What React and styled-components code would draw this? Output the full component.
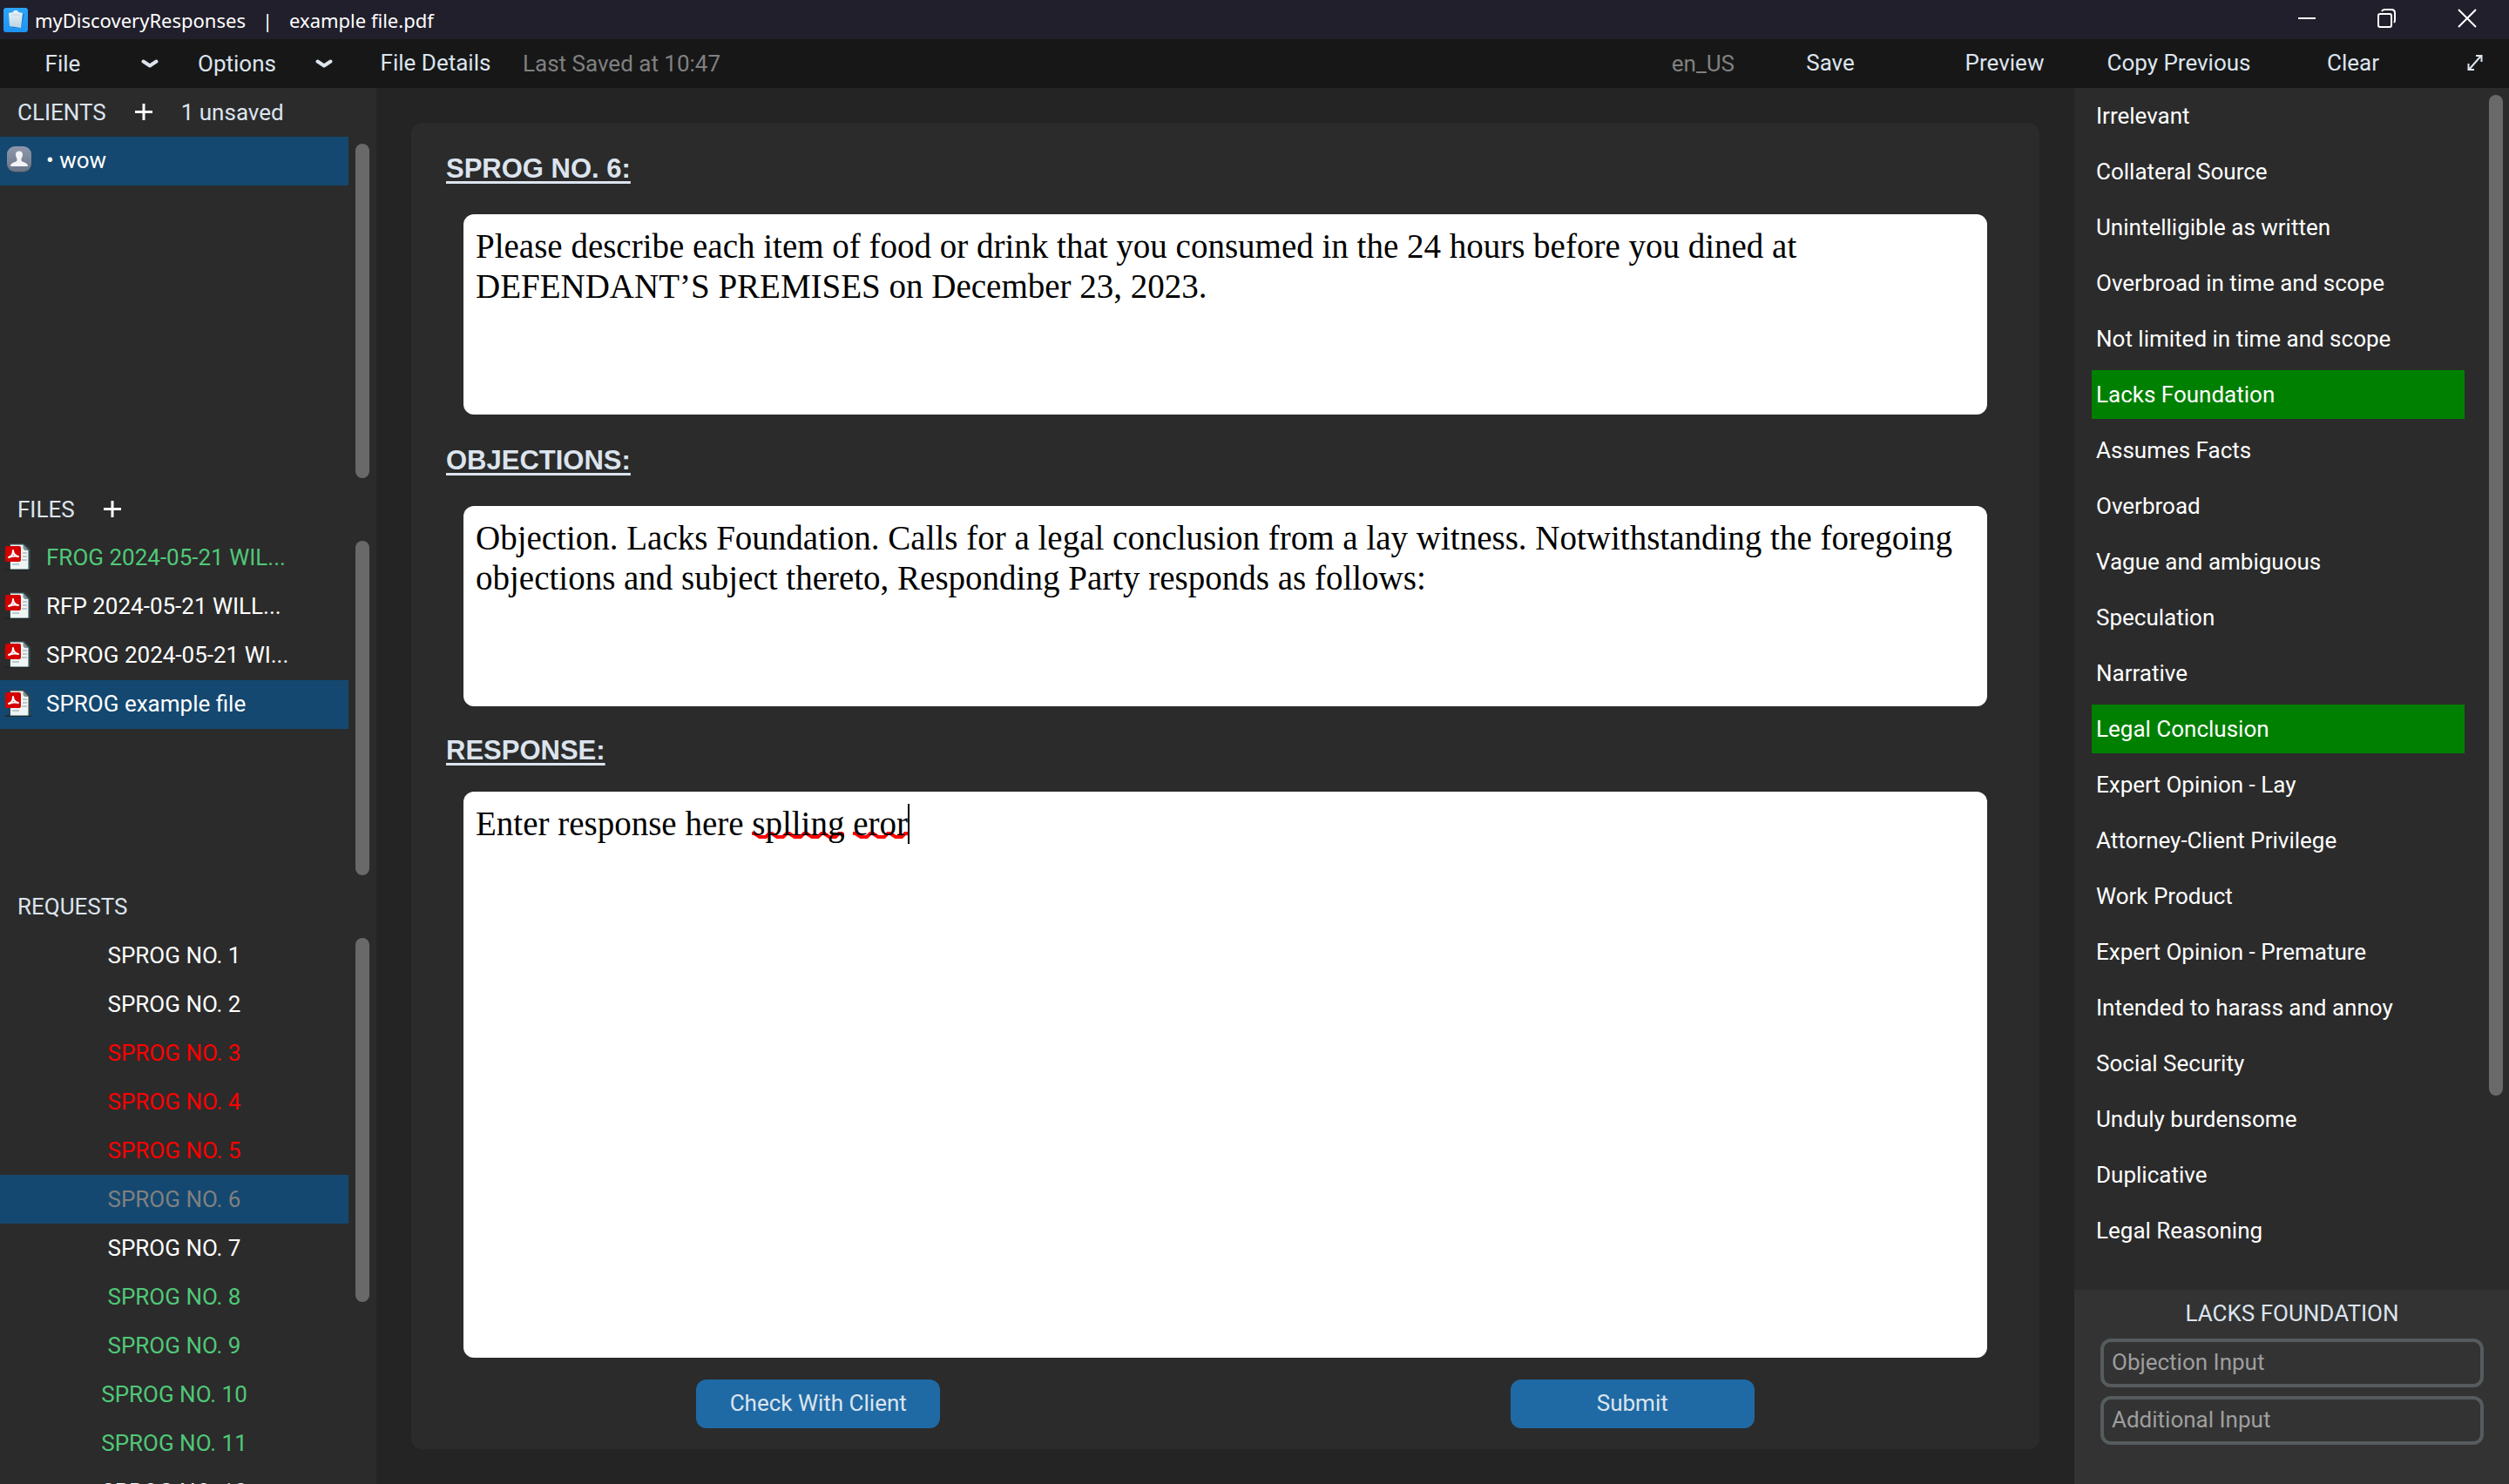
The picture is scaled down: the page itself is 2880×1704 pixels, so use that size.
import React, { useLayoutEffect, useRef, useState } from "react";
import styled, { createGlobalStyle } from "styled-components";

const GlobalStyle = createGlobalStyle`
  *, *::before, *::after { box-sizing: border-box; }
  html, body, #root { height: 100%; margin: 0; }
  body {
    background: #242424;
    color: #dce4ee;
    font-family: Roboto, "Liberation Sans", sans-serif;
    font-size: 26px;
    line-height: 30px;
    overflow: hidden;
  }
  button {
    border: 0;
    margin: 0;
    padding: 0;
    background: transparent;
    color: inherit;
    font: inherit;
    cursor: pointer;
  }
  h1, h2, ul { margin: 0; padding: 0; font: inherit; list-style: none; }
  svg { display: block; flex: none; }
`;

const Window = styled.div`
  display: flex;
  flex-direction: column;
  height: 100vh;
`;

const TitleBar = styled.header`
  display: flex;
  flex: none;
  align-items: center;
  height: 45px;
  padding: 0 2px 0 4px;
  background: #211f2b;
  color: #ffffff;
  font-family: "Noto Sans", "Open Sans", sans-serif;
  font-size: 22px;
`;

const WindowTitle = styled.h1`
  display: flex;
  flex: 1;
  gap: 19px;
  padding-left: 7px;
  white-space: pre;
`;

const WindowButton = styled.button`
  display: grid;
  place-items: center;
  width: 92px;
  height: 45px;
  padding-bottom: 3px;
`;

const MenuBar = styled.nav`
  display: flex;
  flex: none;
  align-items: center;
  height: 56px;
  background: #171717;
`;

const MenuButton = styled.button`
  width: ${(p) => (p.$narrow ? 79 : 200)}px;
  height: 56px;
  padding-bottom: 2px;
  display: grid;
  place-items: center;
`;

const DropButton = styled.button`
  display: grid;
  grid-template-columns: 1fr 56px;
  place-items: center;
  width: 200px;
  height: 56px;
`;

const Muted = styled.span`
  color: #808080;
`;

const Spacer = styled.div`
  flex: 1;
`;

const Language = styled(Muted)`
  padding-right: 10px;
`;

const Body = styled.div`
  display: flex;
  flex: 1;
  min-height: 0;
`;

const Sidebar = styled.aside`
  display: flex;
  flex-direction: column;
  flex: none;
  width: 432px;
  background: #2b2b2b;
`;

const Section = styled.section`
  display: flex;
  flex-direction: column;
  flex: ${(p) => (p.$fill ? "1" : "none")};
  min-height: 0;
  height: ${(p) => (p.$fill ? "auto" : "456px")};
`;

const SectionHead = styled.div`
  display: flex;
  flex: none;
  align-items: center;
  gap: 32px;
  height: 56px;
  padding-left: 20px;
`;

const AddButton = styled.button`
  width: 22px;
`;

const ScrollArea = styled.div`
  display: flex;
  flex: 1;
  min-height: 0;
  justify-content: space-between;
  overflow: hidden;
`;

const SideList = styled.ul`
  width: 400px;
`;

const SideRow = styled.button`
  display: flex;
  align-items: center;
  justify-content: ${(p) => (p.$centered ? "center" : "flex-start")};
  gap: 17px;
  width: 100%;
  height: 56px;
  padding: ${(p) => (p.$centered ? "0" : "0 4px 2px")};
  background: ${(p) => (p.$selected ? "#144870" : "transparent")};
  color: ${(p) => p.$color || "#ffffff"};
  white-space: nowrap;
`;

const Track = styled.div`
  flex: none;
  width: 16px;
  margin: 8px ${(p) => p.$edge}px 8px 0;
`;

const Thumb = styled.div`
  height: ${(p) => p.$size};
  border-radius: 8px;
  background: #696969;
`;

const Main = styled.main`
  display: flex;
  flex: 1;
  min-width: 0;
  padding: 40px;
`;

const Card = styled.form`
  display: flex;
  flex-direction: column;
  flex: 1;
  min-width: 0;
  padding-bottom: 24px;
  border-radius: 12px;
  background: #2b2b2b;
`;

const FieldTitle = styled.label`
  align-self: flex-start;
  margin: 32px 40px;
  font-family: "Liberation Sans", Arial, sans-serif;
  font-size: 31px;
  font-weight: 700;
  line-height: 41px;
  text-decoration: underline;
  text-decoration-thickness: 3px;
  text-underline-offset: 4px;
  text-decoration-skip-ink: none;
`;

const ResponseTitle = styled(FieldTitle)`
  margin: 30px 40px 27px;
`;

const Paper = styled.div`
  position: relative;
  display: flex;
  flex: ${(p) => (p.$fill ? "1" : "none")};
  height: ${(p) => (p.$fill ? "auto" : "230px")};
  min-height: 0;
  margin: 0 60px;
  border-radius: 12px;
  background: #ffffff;
`;

const PaperText = styled.textarea`
  position: relative;
  flex: 1;
  min-width: 0;
  padding: 14px;
  border: 0;
  outline: 0;
  resize: none;
  background: transparent;
  color: #000000;
  font: 39px/46px "Liberation Serif", "Times New Roman", serif;
`;

const Squiggle = styled.div`
  position: absolute;
  top: 46px;
  height: 8px;
  overflow: hidden;
`;

const Caret = styled.div`
  position: absolute;
  top: 14px;
  width: 2px;
  height: 46px;
  background: #000000;
`;

const Actions = styled.div`
  display: grid;
  grid-template-columns: 1fr 1fr;
  justify-items: center;
  margin-top: 25px;
`;

const ActionButton = styled.button`
  width: 280px;
  height: 56px;
  padding-bottom: 2px;
  border-radius: 12px;
  background: #1f6aa5;
`;

const ObjectionPanel = styled.aside`
  display: flex;
  flex-direction: column;
  flex: none;
  width: 499px;
  background: #2b2b2b;
`;

const ObjectionList = styled.ul`
  display: flex;
  flex-direction: column;
  gap: 8px;
  width: 428px;
  margin: 4px 0 0 20px;
`;

const ObjectionButton = styled.button`
  display: block;
  width: 100%;
  height: 56px;
  padding: 0 5px 1px;
  background: ${(p) => (p.$selected ? "#008000" : "transparent")};
  color: #ffffff;
  text-align: left;
`;

const Editor = styled.div`
  display: flex;
  flex-direction: column;
  flex: none;
  gap: 10px;
  height: 223px;
  padding: 12px 29px 0 30px;
  background: #333333;
`;

const EditorTitle = styled.h2`
  margin-bottom: 4px;
  text-align: center;
`;

const EditorInput = styled.input`
  width: 100%;
  height: 56px;
  padding: 0 9px 2px;
  border: 4px solid #565b5e;
  border-radius: 12px;
  outline: 0;
  background: transparent;
  color: #dce4ee;
  font: inherit;
  &::placeholder { color: #9e9e9e; opacity: 1; }
`;

const GREEN = "#50c878";
const RED = "#ff0000";

const files = [
  { name: "FROG 2024-05-21 WIL...", color: GREEN },
  { name: "RFP 2024-05-21 WILL..." },
  { name: "SPROG 2024-05-21 WI..." },
  { name: "SPROG example file", selected: true },
];

const requestColors = {
  3: RED, 4: RED, 5: RED, 6: "#808080", 8: GREEN, 9: GREEN, 10: GREEN, 11: GREEN,
};

const objections = [
  "Irrelevant", "Collateral Source", "Unintelligible as written",
  "Overbroad in time and scope", "Not limited in time and scope",
  "Lacks Foundation", "Assumes Facts", "Overbroad", "Vague and ambiguous",
  "Speculation", "Narrative", "Legal Conclusion", "Expert Opinion - Lay",
  "Attorney-Client Privilege", "Work Product", "Expert Opinion - Premature",
  "Intended to harass and annoy", "Social Security", "Unduly burdensome",
  "Duplicative", "Legal Reasoning",
];
const activeObjections = ["Lacks Foundation", "Legal Conclusion"];

function AppIcon() {
  return (
    <svg width="29" height="30" viewBox="0 0 29 30" aria-hidden="true">
      <defs>
        <linearGradient id="appBlue" x1="0" y1="0" x2="0" y2="1">
          <stop offset="0" stopColor="#2ba6fa" />
          <stop offset="1" stopColor="#1f93f0" />
        </linearGradient>
        <linearGradient id="appSheet" x1="0" y1="0" x2="0" y2="1">
          <stop offset="0" stopColor="#e9f3f8" />
          <stop offset="1" stopColor="#bdd4e3" />
        </linearGradient>
      </defs>
      <rect y="1" width="28" height="28" rx="3" fill="url(#appBlue)" />
      <path d="M10 24h10l4-15-3-2z" fill="#1674c4" opacity=".7" />
      <path d="M6 7l5-1 1-2h4l1 2 5 1-2 17-13-2z" fill="url(#appSheet)" />
      <path d="M9 9h10" stroke="#c2d6e3" strokeWidth="1" />
    </svg>
  );
}

function PersonIcon() {
  return (
    <svg width="32" height="32" viewBox="0 0 32 32" aria-hidden="true">
      <defs>
        <linearGradient id="personGrey" x1="0" y1="0" x2="0" y2="1">
          <stop offset="0" stopColor="#8d98ab" />
          <stop offset="1" stopColor="#6b7689" />
        </linearGradient>
      </defs>
      <rect x="4" y="1" width="28" height="29" rx="9" fill="#3e4c60" />
      <rect x="4" y="0" width="28" height="29" rx="9" fill="url(#personGrey)" />
      <path
        d="M18 5.500c2.500 0 4 1.500 4 4 0 2-1 3.500-1.500 5v2c1.500 2 7.500 2 7.500 6.500H8c0-4.500 6-4.500 7.500-6.500v-2c-.5-1.500-1.500-3-1.500-5 0-2.500 1.500-4 4-4z"
        fill="#f3f4f7"
      />
    </svg>
  );
}

function PdfIcon() {
  return (
    <svg width="32" height="32" viewBox="0 0 32 32" aria-hidden="true">
      <path d="M2 29h30v2H2z" fill="#1b2627" opacity=".8" />
      <path d="M7 0h17l7 7v23H7z" fill="#33484b" />
      <path d="M8 1.500h14.500L28.500 8v21.500H8z" fill="#eef5f5" />
      <path d="M22.500 1.500l6 6.500h-4l-2-2z" fill="#7d9292" />
      <path d="M22 11h5M22 15h5M21 19h6M10 24h8" stroke="#bccaca" strokeWidth="2" />
      <rect x="2" y="3" width="18" height="18" rx="2" fill="#d40000" />
      <path
        d="M6 16c3-1 5-4 5-8 0 4 2 6 6 7-4-1-8 0-11 1z"
        fill="none"
        stroke="#ffffff"
        strokeWidth="2"
        strokeLinejoin="round"
      />
    </svg>
  );
}

function PlusIcon() {
  return (
    <svg width="22" height="22" viewBox="0 0 22 22" aria-hidden="true">
      <path d="M11 1v19M1 10.500h20" stroke="#ffffff" strokeWidth="3" />
    </svg>
  );
}

function ChevronIcon() {
  return (
    <svg width="20" height="12" viewBox="0 0 20 12" aria-hidden="true">
      <path
        d="M2.500 3.500l7.500 5 7.500-5"
        fill="none"
        stroke="#dce4ee"
        strokeWidth="4"
        strokeLinecap="round"
        strokeLinejoin="round"
      />
    </svg>
  );
}

function ExpandIcon() {
  return (
    <svg width="20" height="20" viewBox="0 0 20 20" aria-hidden="true">
      <path
        d="M3 18L17 2M11 2h6.500v7M2.500 11v7H9"
        fill="none"
        stroke="#dce4ee"
        strokeWidth="2"
      />
    </svg>
  );
}

const windowIcons = {
  Minimize: "M1 11h20",
  Restore: "M1 8q0-2 2-2h11q2 0 2 2v11q0 2-2 2H3q-2 0-2-2zM5 3q1-2 3-2h8q4 0 4 4v8q0 2-1 3",
  Close: "M1 1l20 20M21 1L1 21",
};

function List({ children, size, edge = 8 }) {
  return (
    <ScrollArea>
      {children}
      <Track $edge={edge}>
        <Thumb $size={size} />
      </Track>
    </ScrollArea>
  );
}

const WAVE = 20;
const misspelled = ["splling", "eror"];

function SpellCheckedText({ id, defaultValue }) {
  const ref = useRef(null);
  const [text, setText] = useState(defaultValue);
  const [marks, setMarks] = useState({ words: [], caret: null });

  useLayoutEffect(() => {
    const css = getComputedStyle(ref.current);
    const pen = document.createElement("canvas").getContext("2d");
    pen.font = `${css.fontSize} ${css.fontFamily}`;
    const pad = parseInt(css.paddingLeft, 10);
    const widthOf = (s) => Math.round(pen.measureText(s).width);
    const words = misspelled
      .filter((w) => text.includes(w))
      .map((w) => ({ left: pad + widthOf(text.slice(0, text.indexOf(w))), width: widthOf(w) }));
    setMarks({ words, caret: pad + widthOf(text) });
  }, [text]);

  return (
    <Paper $fill>
      {marks.words.map((m, i) => (
        <Squiggle key={i} style={{ left: m.left, width: m.width }}>
          <svg width="400" height="8" viewBox="0 0 400 8" aria-hidden="true">
            <path
              d={Array.from({ length: 20 }, (_, n) => {
                const x = n * WAVE;
                return `M${x} 2h3l6 4h7l4-4h2`;
              }).join("")}
              fill="none"
              stroke="#ff0000"
              strokeWidth="4"
            />
          </svg>
        </Squiggle>
      ))}
      <PaperText
        id={id}
        ref={ref}
        value={text}
        spellCheck={false}
        onChange={(e) => setText(e.target.value)}
      />
      {marks.caret !== null && <Caret style={{ left: marks.caret }} />}
    </Paper>
  );
}

export default function App() {
  return (
    <Window>
      <GlobalStyle />
      <TitleBar>
        <AppIcon />
        <WindowTitle>
          <span>myDiscoveryResponses</span>
          <span>|</span>
          <span>example file.pdf</span>
        </WindowTitle>
        {Object.entries(windowIcons).map(([name, d]) => (
          <WindowButton key={name} aria-label={name}>
            <svg width="22" height="22" viewBox="0 0 22 22" aria-hidden="true">
              <path d={d} fill="none" stroke="#ffffff" strokeWidth="2" />
            </svg>
          </WindowButton>
        ))}
      </TitleBar>

      <MenuBar>
        <DropButton aria-haspopup="menu">File<ChevronIcon /></DropButton>
        <DropButton aria-haspopup="menu">Options<ChevronIcon /></DropButton>
        <MenuButton>File Details</MenuButton>
        <Muted>Last Saved at 10:47</Muted>
        <Spacer />
        <Language>en_US</Language>
        <MenuButton>Save</MenuButton>
        <MenuButton>Preview</MenuButton>
        <MenuButton>Copy Previous</MenuButton>
        <MenuButton>Clear</MenuButton>
        <MenuButton $narrow aria-label="Expand"><ExpandIcon /></MenuButton>
      </MenuBar>

      <Body>
        <Sidebar>
          <Section>
            <SectionHead>
              <h2>CLIENTS</h2>
              <AddButton aria-label="Add client"><PlusIcon /></AddButton>
              <span>1 unsaved</span>
            </SectionHead>
            <List size="100%">
              <SideList>
                <li><SideRow $selected><PersonIcon />• wow</SideRow></li>
              </SideList>
            </List>
          </Section>

          <Section>
            <SectionHead>
              <h2>FILES</h2>
              <AddButton aria-label="Add file"><PlusIcon /></AddButton>
            </SectionHead>
            <List size="100%">
              <SideList>
                {files.map((f) => (
                  <li key={f.name}>
                    <SideRow $selected={f.selected} $color={f.color}><PdfIcon />{f.name}</SideRow>
                  </li>
                ))}
              </SideList>
            </List>
          </Section>

          <Section $fill>
            <SectionHead><h2>REQUESTS</h2></SectionHead>
            <List size="418px">
              <SideList>
                {Array.from({ length: 12 }, (_, i) => i + 1).map((n) => (
                  <li key={n}>
                    <SideRow $centered $selected={n === 6} $color={requestColors[n]}>
                      SPROG NO. {n}
                    </SideRow>
                  </li>
                ))}
              </SideList>
            </List>
          </Section>
        </Sidebar>

        <Main>
          <Card onSubmit={(e) => e.preventDefault()}>
            <FieldTitle htmlFor="request">SPROG NO. 6:</FieldTitle>
            <Paper>
              <PaperText
                id="request"
                spellCheck={false}
                defaultValue="Please describe each item of food or drink that you consumed in the 24 hours before you dined at DEFENDANT’S PREMISES on December 23, 2023."
              />
            </Paper>
            <FieldTitle htmlFor="objections">OBJECTIONS:</FieldTitle>
            <Paper>
              <PaperText
                id="objections"
                spellCheck={false}
                defaultValue="Objection. Lacks Foundation. Calls for a legal conclusion from a lay witness. Notwithstanding the foregoing objections and subject thereto, Responding Party responds as follows:"
              />
            </Paper>
            <ResponseTitle htmlFor="response">RESPONSE:</ResponseTitle>
            <SpellCheckedText id="response" defaultValue="Enter response here splling eror" />
            <Actions>
              <ActionButton type="button">Check With Client</ActionButton>
              <ActionButton type="submit">Submit</ActionButton>
            </Actions>
          </Card>
        </Main>

        <ObjectionPanel>
          <List size="1149px" edge={7}>
            <ObjectionList>
              {objections.map((o) => (
                <li key={o}>
                  <ObjectionButton $selected={activeObjections.includes(o)}>{o}</ObjectionButton>
                </li>
              ))}
            </ObjectionList>
          </List>
          <Editor>
            <EditorTitle>LACKS FOUNDATION</EditorTitle>
            <EditorInput aria-label="Objection Input" placeholder="Objection Input" />
            <EditorInput aria-label="Additional Input" placeholder="Additional Input" />
          </Editor>
        </ObjectionPanel>
      </Body>
    </Window>
  );
}
